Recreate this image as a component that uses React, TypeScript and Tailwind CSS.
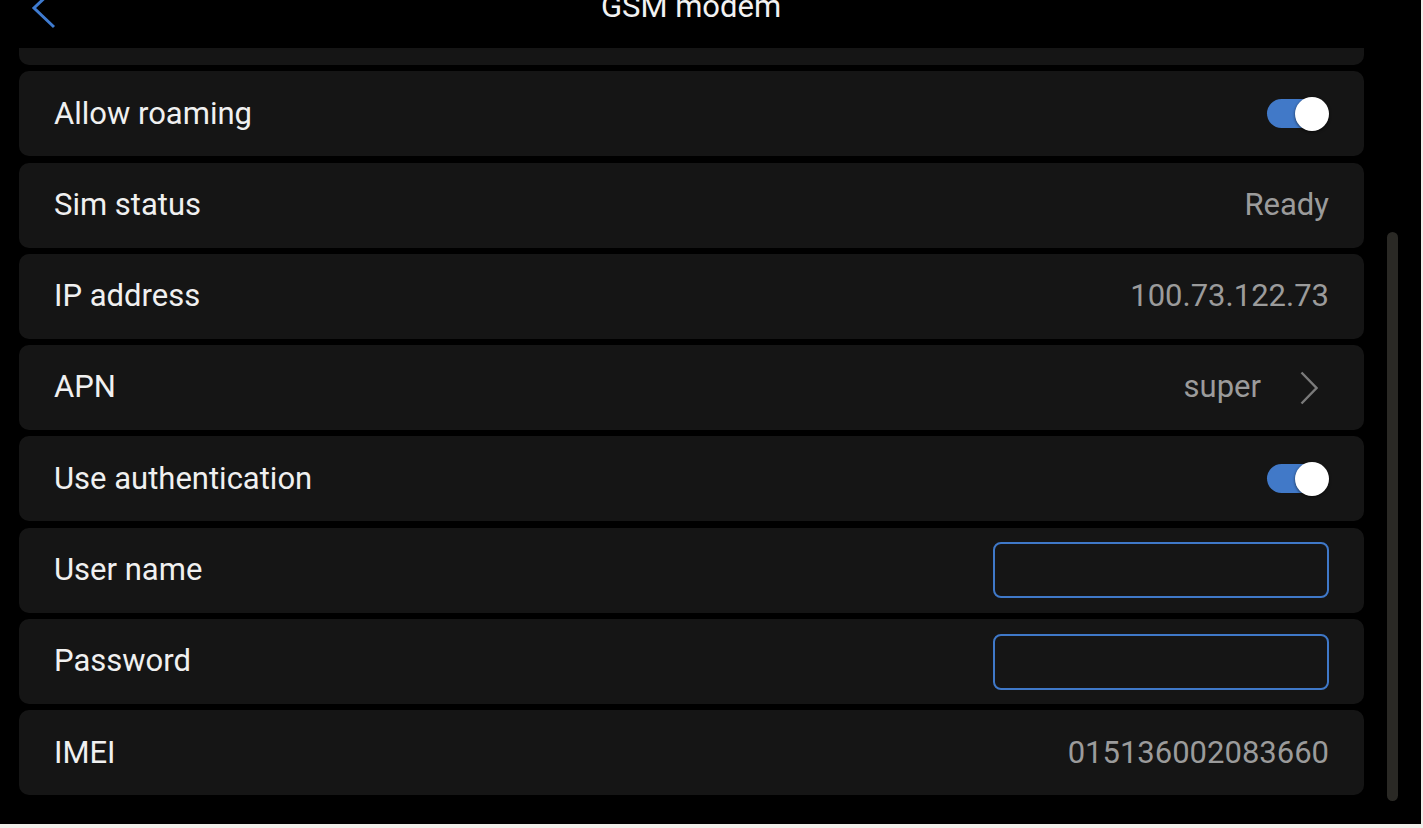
import { ReactNode } from "react";

type Row = {
    label: string;
    kind: "toggle" | "value" | "link" | "input";
    value?: string;
};

const rows: Row[] = [
    { label: "Allow roaming", kind: "toggle" },
    { label: "Sim status", kind: "value", value: "Ready" },
    { label: "IP address", kind: "value", value: "100.73.122.73" },
    { label: "APN", kind: "link", value: "super" },
    { label: "Use authentication", kind: "toggle" },
    { label: "User name", kind: "input" },
    { label: "Password", kind: "input" },
    { label: "IMEI", kind: "value", value: "015136002083660" },
];

function Toggle() {
    return (
        <div className="relative w-[62px] h-[34px]">
            <div className="absolute left-0 top-[2.5px] w-[56px] h-[29px] rounded-full bg-[#4179c8]" />
            <div className="absolute right-0 top-0 w-[34px] h-[34px] rounded-full bg-white shadow-[0_1px_3px_rgba(0,0,0,0.6)]" />
        </div>
    );
}

function RightSide({ row }: { row: Row }): ReactNode {
    switch (row.kind) {
        case "toggle":
            return <Toggle />;
        case "value":
            return <span className="text-[#9b9b9b]">{row.value}</span>;
        case "link":
            return (
                <div className="flex items-center">
                    <span className="text-[#9b9b9b]">{row.value}</span>
                    <svg className="ml-[39px] mr-[11px]" width="18" height="34" viewBox="0 0 18 34" fill="none">
                        <polyline points="1.5,1.5 16.5,17 1.5,32.5" stroke="#7a7a7a" strokeWidth="2.4" />
                    </svg>
                </div>
            );
        case "input":
            return (
                <input
                    type="text"
                    className="w-[336px] h-[56px] rounded-[8px] border-2 border-[#3f78c8] bg-transparent px-3 text-white focus:outline-none"
                />
            );
    }
}

export default function App() {
    return (
        <div
            className="w-[1423px] h-[828px] bg-[#f0eeea] overflow-hidden"
            style={{ fontFamily: "Roboto, 'Liberation Sans', sans-serif" }}
        >
            <div className="w-[1421px] h-[824px] bg-black flex flex-col">
                <header className="relative h-[48px] shrink-0 flex justify-center pr-[39px] overflow-hidden">
                    <svg className="absolute left-[31px] top-[-12px]" width="26" height="42" viewBox="0 0 26 42" fill="none">
                        <polyline points="23,1 3,20 23,39" stroke="#3f7bd0" strokeWidth="3" />
                    </svg>
                    <h1 className="mt-[-9px] text-[31px] leading-[31px] text-[#f2f2f2]">GSM modem</h1>
                </header>

                <div className="flex flex-1 min-h-0">
                    <div className="ml-[19px] w-[1345px] flex flex-col gap-[6.3px] text-[31px] text-[#f0f0f0]">
                        <div className="h-[17px] rounded-b-[10px] bg-[#151515]" />
                        {rows.map((row) => (
                            <div
                                key={row.label}
                                className="h-[85px] shrink-0 rounded-[10px] bg-[#151515] flex items-center justify-between pl-[35px] pr-[35px]"
                            >
                                <span>{row.label}</span>
                                <RightSide row={row} />
                            </div>
                        ))}
                    </div>
                    <div className="ml-[23px] mt-[184px] w-[11px] h-[569px] rounded-full bg-[#2a2925]" />
                </div>
            </div>
        </div>
    );
}
